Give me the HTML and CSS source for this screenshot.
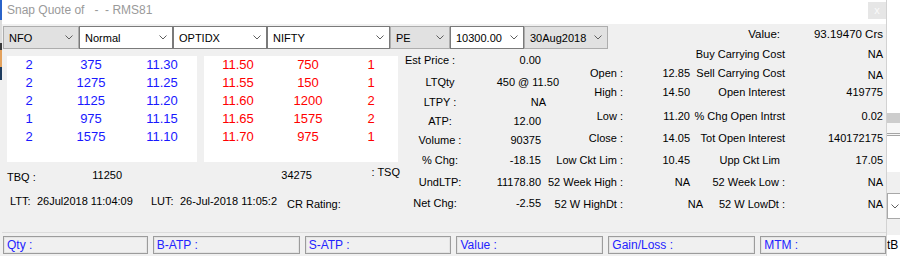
FILE: index.html
```html
<!DOCTYPE html>
<html lang="en">

<head>
  <meta charset="UTF-8">
  <title>Snap Quote</title>
  <link rel="stylesheet" href="styles.css">
</head>

<body>
  <div class="screen">
    <!-- desktop behind the window, left edge -->
    <div class="edge-left">
      <span class="el-blue"></span>
      <span class="el-light"></span>
      <span class="el-dark"></span>
      <span class="el-orange"></span>
      <span class="el-navy"></span>
      <span class="el-rest"></span>
    </div>

    <div class="window">
      <div class="titlebar">
        <span class="title">Snap Quote of   -  - RMS81</span>
        <span class="close-btn">x</span>
      </div>

      <div class="toolbar">
        <div class="combo flat w-nfo"><span>NFO</span><svg width="8" height="5" viewBox="0 0 8 5"><polyline points="0.5,0.5 4,4 7.5,0.5" /></svg></div>
        <div class="combo w-normal"><span>Normal</span><svg width="8" height="5" viewBox="0 0 8 5"><polyline points="0.5,0.5 4,4 7.5,0.5" /></svg></div>
        <div class="combo w-instr"><span>OPTIDX</span><svg width="8" height="5" viewBox="0 0 8 5"><polyline points="0.5,0.5 4,4 7.5,0.5" /></svg></div>
        <div class="combo w-symbol"><span>NIFTY</span><svg width="8" height="5" viewBox="0 0 8 5"><polyline points="0.5,0.5 4,4 7.5,0.5" /></svg></div>
        <div class="combo flat w-opt"><span>PE</span><svg width="8" height="5" viewBox="0 0 8 5"><polyline points="0.5,0.5 4,4 7.5,0.5" /></svg></div>
        <div class="combo w-strike"><span>10300.00</span><svg width="8" height="5" viewBox="0 0 8 5"><polyline points="0.5,0.5 4,4 7.5,0.5" /></svg></div>
        <div class="combo flat w-expiry"><span>30Aug2018</span><svg width="8" height="5" viewBox="0 0 8 5"><polyline points="0.5,0.5 4,4 7.5,0.5" /></svg></div>

        <div class="value-head">
          <span class="vh-label">Value:</span>
          <span class="vh-num">93.19470 Crs</span>
        </div>
      </div>

      <div class="main">
        <div class="left">
          <div class="depth">
            <div class="book bid">
              <span>2</span><span>375</span><span>11.30</span>
              <span>2</span><span>1275</span><span>11.25</span>
              <span>2</span><span>1125</span><span>11.20</span>
              <span>1</span><span>975</span><span>11.15</span>
              <span>2</span><span>1575</span><span>11.10</span>
            </div>
            <div class="book ask">
              <span>11.50</span><span>750</span><span>1</span>
              <span>11.55</span><span>150</span><span>1</span>
              <span>11.60</span><span>1200</span><span>2</span>
              <span>11.65</span><span>1575</span><span>2</span>
              <span>11.70</span><span>975</span><span>1</span>
            </div>
          </div>

          <div class="info r1">
            <span class="c-tbq down">TBQ :</span>
            <span class="c-tbqv">11250</span>
            <span class="c-tsqv">34275</span>
            <span class="up">: TSQ</span>
          </div>
          <div class="info r2">
            <span class="c-ltt">LTT:</span>
            <span class="c-lttv">26Jul2018 11:04:09</span>
            <span class="c-lut">LUT:</span>
            <span class="c-lutv">26-Jul-2018 11:05:2</span>
            <span class="c-cr">CR Rating:</span>
          </div>
        </div>

        <div class="stats">
          <span class="lbl est">Est Price :</span><span class="val">0.00</span>
          <span class="lbl">LTQty</span><span class="val wide">450 @ 11.50</span>
          <span class="lbl">LTPY :</span><span class="val na">NA</span>
          <span class="lbl">ATP:</span><span class="val">12.00</span>
          <span class="lbl">Volume :</span><span class="val">90375</span>
          <span class="lbl">% Chg:</span><span class="val">-18.15</span>
          <span class="lbl">UndLTP:</span><span class="val">11178.80</span>
          <span class="lbl netchg">Net Chg:</span><span class="val">-2.55</span>
        </div>

        <div class="stats-right">
          <span></span><span></span><span class="lbl2">Buy Carrying Cost</span><span class="val2">NA</span>
          <span class="lbl1">Open :</span><span class="val1">12.85</span><span class="lbl2">Sell Carrying Cost</span><span class="val2 low">NA</span>
          <span class="lbl1">High :</span><span class="val1">14.50</span><span class="lbl2">Open Interest</span><span class="val2">419775</span>
          <span class="lbl1">Low :</span><span class="val1">11.20</span><span class="lbl2">% Chg Open Intrst</span><span class="val2">0.02</span>
          <span class="lbl1">Close :</span><span class="val1">14.05</span><span class="lbl2">Tot Open Interest</span><span class="val2">140172175</span>
          <span class="lbl1">Low Ckt Lim :</span><span class="val1">10.45</span><span class="lbl2 upp">Upp Ckt Lim</span><span class="val2">17.05</span>
          <span class="lbl1">52 Week High :</span><span class="val1">NA</span><span class="lbl2">52 Week Low :</span><span class="val2">NA</span>
          <span class="lbl1">52 W HighDt :</span><span class="val1 out">NA</span><span class="lbl2">52 W LowDt :</span><span class="val2">NA</span>
        </div>
      </div>

      <div class="statusbar">
        <div class="pane">Qty :</div>
        <div class="pane">B-ATP :</div>
        <div class="pane">S-ATP :</div>
        <div class="pane">Value :</div>
        <div class="pane">Gain/Loss :</div>
        <div class="pane last">MTM :</div>
      </div>
    </div>

    <!-- desktop behind the window, right edge -->
    <div class="edge-right">
      <span class="er-white"></span>
      <span class="er-band"></span>
      <span class="er-rule"></span>
      <span class="er-white2"></span>
      <span class="er-grey"></span>
      <span class="er-combo"><svg width="8" height="5" viewBox="0 0 8 5"><polyline points="0.5,0.5 4,4 7.5,0.5" /></svg></span>
      <span class="er-grey2"></span>
      <span class="er-text">tB</span>
    </div>
  </div>
</body>

</html>
```

FILE: styles.css
```css
body {
  margin: 0;
  width: 900px;
  height: 256px;
  overflow: hidden;
  font-family: "Liberation Sans", Arial, sans-serif;
  color: #000;
}

.screen {
  display: flex;
  height: 256px;
}

/* 背景里的其他窗口 */
.edge-left {
  width: 2px;
  display: flex;
  flex-direction: column;
}

.el-blue { height: 20px; background: #2a63c9; }
.el-light { height: 23px; background: #dcdcdc; }
.el-dark { height: 7px; background: #3a3a3a; }
.el-orange { height: 17px; background: #e3a15c; }
.el-navy { height: 13px; background: #1d3b5e; }
.el-rest { flex: 1; background: #f0f0f0; }

.edge-right {
  width: 13px;
  display: flex;
  flex-direction: column;
  background: #fff;
  overflow: hidden;
}

.er-white { height: 113px; }
.er-band { height: 10px; background: #cdcdcd; }
.er-rule { height: 10px; background: #f7f7f7; border-bottom: 3px double #a5a5a5; }
.er-white2 { height: 36px; }
.er-grey { height: 21px; background: #f0f0f0; }

.er-combo {
  height: 26px;
  box-sizing: border-box;
  border: 1px solid #a8a8a8;
  border-right: none;
  background: #fff;
  display: flex;
  align-items: center;
  padding-left: 3px;
}

.er-grey2 { height: 16px; background: #f0f0f0; }

.er-text {
  flex: 1;
  font-size: 12px;
  line-height: 21px;
  white-space: nowrap;
}

svg polyline {
  fill: none;
  stroke: #5f5f5f;
  stroke-width: 1;
}

/* 主窗口 */
.window {
  width: 885px;
  box-sizing: border-box;
  display: flex;
  flex-direction: column;
  background: #f0f0f0;
  border-right: 1px solid #d2d2d2;
}

.titlebar {
  height: 24px;
  background: #fff;
  display: flex;
  justify-content: space-between;
  align-items: flex-start;
}

.title {
  padding-left: 5px;
  font-size: 12px;
  line-height: 20px;
  color: #9a9a9a;
  white-space: pre;
}

.close-btn {
  width: 18px;
  height: 17px;
  margin-top: 2px;
  background: #e6e6e6;
  color: #fafafa;
  font-size: 11px;
  line-height: 16px;
  text-align: center;
}

.toolbar {
  height: 26px;
  display: flex;
  align-items: flex-start;
  padding: 2px 3px 0 1px;
  box-sizing: border-box;
}

.combo {
  height: 23px;
  box-sizing: border-box;
  border: 1px solid #7a7a7a;
  background: #fff;
  display: flex;
  align-items: center;
  justify-content: space-between;
  padding: 0 5px 0 5px;
  font-size: 11px;
}

.combo.flat {
  background: #e1e1e1;
  border-color: #adadad;
}

.w-nfo { width: 76px; }
.w-normal { width: 94px; }
.w-instr { width: 94px; }
.w-symbol { width: 123px; }
.w-opt { width: 60px; }
.w-strike { width: 74px; }
.w-expiry { width: 84px; }

.value-head {
  margin-left: auto;
  display: flex;
  font-size: 11.5px;
  line-height: 16px;
}

.vh-label { margin-right: 5px; }

.vh-num {
  width: 98px;
  text-align: right;
}

/* 报价区域 */
.main {
  flex: 1;
  display: flex;
  align-items: flex-start;
  font-size: 11px;
  line-height: 16px;
}

.left {
  width: 398px;
  padding: 6px 0 0 5px;
  box-sizing: border-box;
  display: flex;
  flex-direction: column;
}

.depth {
  display: flex;
  gap: 7px;
}

.book {
  height: 106px;
  background: #fff;
  display: grid;
  grid-auto-rows: 18px;
  align-content: start;
  font-size: 13px;
  line-height: 18px;
  text-align: center;
}

.bid {
  width: 190px;
  grid-template-columns: 44px 80px 62px;
  color: #1818ff;
}

.ask {
  width: 194px;
  grid-template-columns: 68px 72px 1fr;
  color: #ff0000;
}

.info {
  display: flex;
  white-space: nowrap;
}

.r1 { margin-top: 5px; }
.r2 { margin-top: 8px; padding-left: 3px; }

.down { margin-top: 2px; }
.up { margin-top: -3px; }

.c-tbq { width: 87px; }
.c-tbqv { width: 193px; }
.c-tsqv { width: 92px; }
.c-ltt { width: 27px; }
.c-lttv { width: 114px; }
.c-lut { width: 29px; }
.c-lutv { width: 97px; }

.c-cr {
  margin-left: 10px;
  margin-top: 3px;
}

.stats {
  width: 145px;
  padding: 2px 4px 0 0;
  box-sizing: border-box;
  display: grid;
  grid-template-columns: 80px 61px;
  grid-template-rows: 22px 20px 19px 19px 20px 22px 21px 16px;
  align-items: start;
  white-space: nowrap;
}

.lbl { text-align: center; }

.lbl.est {
  text-align: left;
  padding-left: 5px;
}

.lbl.netchg { padding-right: 10px; }

.val {
  justify-self: end;
  text-align: right;
}

.val.wide { margin-right: -18px; }
.val.na { margin-right: -5px; }

.stats-right {
  width: 342px;
  margin-top: -4px;
  padding-right: 4px;
  box-sizing: border-box;
  display: grid;
  grid-template-columns: 78px 67px 95px 98px;
  grid-template-rows: 19px 19px 24px 22px 22px 22px 22px 16px;
  align-items: start;
  white-space: nowrap;
}

.lbl1,
.val1,
.lbl2,
.val2 {
  text-align: right;
}

.val1.out {
  justify-self: end;
  margin-right: -13px;
}

.lbl2.upp { padding-right: 5px; }
.val2.low { margin-top: 2px; }

/* 状态栏 */
.statusbar {
  height: 24px;
  box-sizing: border-box;
  border-top: 1px solid #dcdcdc;
  padding: 3px 0 0 1px;
  display: flex;
  gap: 5px;
}

.pane {
  width: 145px;
  height: 18px;
  box-sizing: border-box;
  border: 1px solid #9c9c9c;
  box-shadow: inset 0 0 0 1px #e4e4e4;
  padding-left: 3px;
  font-size: 12px;
  line-height: 16px;
  color: #2323ff;
}

.pane + .pane { width: 147px; }
.pane.last { width: 126px; }
```
